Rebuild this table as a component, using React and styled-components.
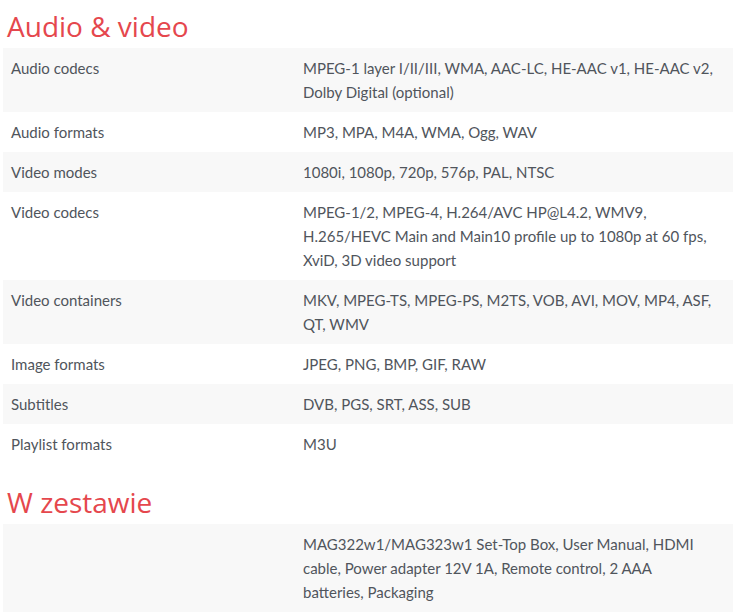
import React from "react";
import styled, { createGlobalStyle } from "styled-components";

const Global = createGlobalStyle`
  html, body { margin: 0; padding: 0; background: #fff; }
  body { font-family: Lato, "Open Sans", sans-serif; }
`;

const Page = styled.div`
  width: 730px;
  padding: 0 12px 0 3px;
`;

const Section = styled.section`
  & + & { margin-top: 20px; }
`;

const Heading = styled.h2`
  margin: 8px 0 4px 4px;
  font-family: "Open Sans", sans-serif;
  font-weight: 400;
  font-size: 28px;
  line-height: 36px;
  color: #e5474d;
`;

const Table = styled.div`
  display: flex;
  flex-direction: column;
`;

const Row = styled.div`
  display: grid;
  grid-template-columns: 40% 60%;
  background: ${(p) => (p.$shaded ? "#f8f8f8" : "#fff")};
`;

const Cell = styled.div`
  padding: 8px ${(p) => (p.$value ? "19px" : "8px")} 8px 8px;
  font-size: 15px;
  line-height: 24px;
  color: #50555c;
`;

const audio = [
  ["Audio codecs", "MPEG-1 layer I/II/III, WMA, AAC-LC, HE-AAC v1, HE-AAC v2, Dolby Digital (optional)"],
  ["Audio formats", "MP3, MPA, M4A, WMA, Ogg, WAV"],
  ["Video modes", "1080i, 1080p, 720p, 576p, PAL, NTSC"],
  ["Video codecs", "MPEG-1/2, MPEG-4, H.264/AVC HP@L4.2, WMV9, H.265/HEVC Main and Main10 profile up to 1080p at 60 fps, XviD, 3D video support"],
  ["Video containers", "MKV, MPEG-TS, MPEG-PS, M2TS, VOB, AVI, MOV, MP4, ASF, QT, WMV"],
  ["Image formats", "JPEG, PNG, BMP, GIF, RAW"],
  ["Subtitles", "DVB, PGS, SRT, ASS, SUB"],
  ["Playlist formats", "M3U"],
];

const kit = [
  ["", "MAG322w1/MAG323w1 Set-Top Box, User Manual, HDMI cable, Power adapter 12V 1A, Remote control, 2 AAA batteries, Packaging"],
];

function SpecTable({ rows }) {
  return (
    <Table>
      {rows.map(([k, v], i) => (
        <Row key={i} $shaded={i % 2 === 0}>
          <Cell>{k}</Cell>
          <Cell $value>{v}</Cell>
        </Row>
      ))}
    </Table>
  );
}

export default function App() {
  return (
    <>
      <Global />
      <Page>
        <Section>
          <Heading>Audio &amp; video</Heading>
          <SpecTable rows={audio} />
        </Section>
        <Section>
          <Heading>W zestawie</Heading>
          <SpecTable rows={kit} />
        </Section>
      </Page>
    </>
  );
}
